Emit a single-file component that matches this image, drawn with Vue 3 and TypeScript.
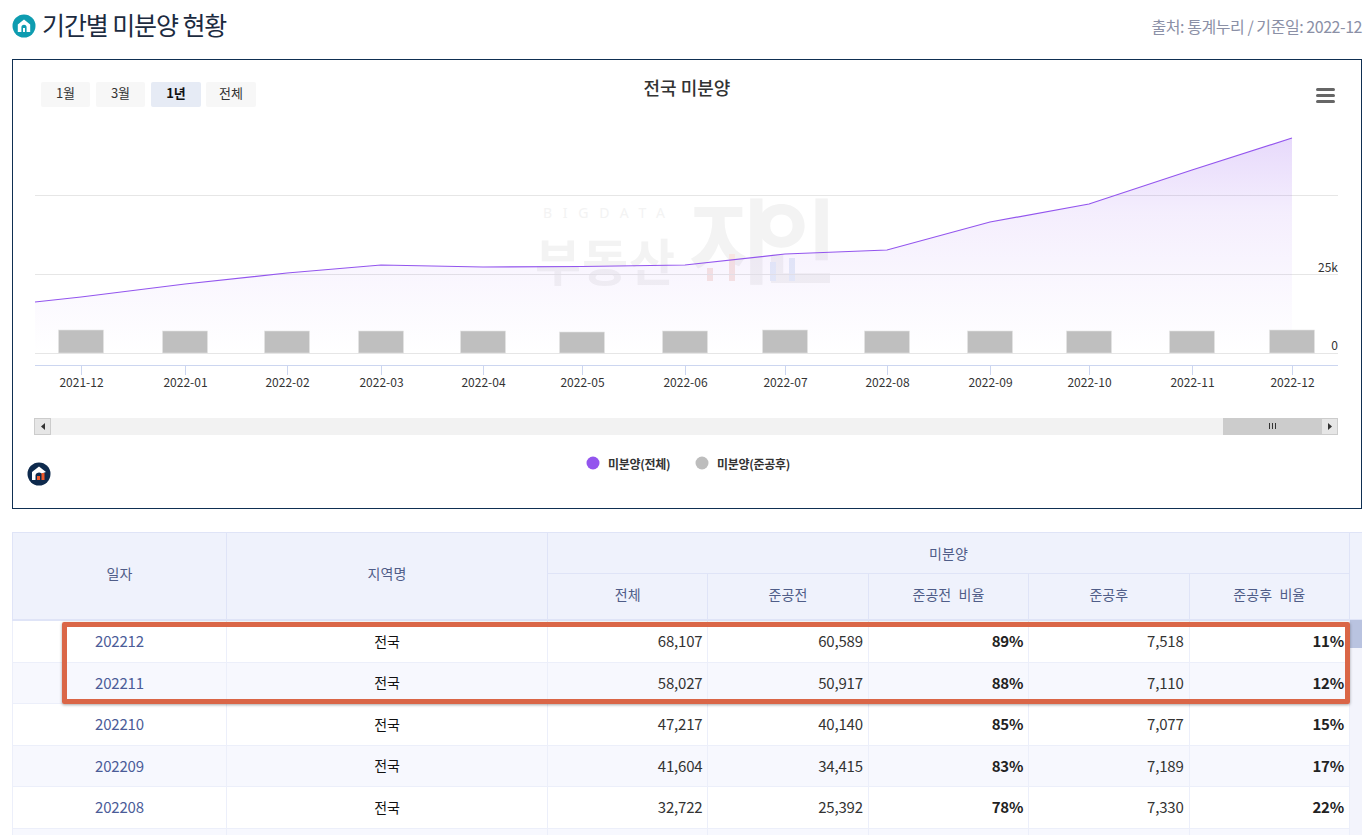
<script setup lang="ts">
interface Row { date: string; total: string; pre: string; preR: string; post: string; postR: string }
const rows: Row[] = [
  { date: '202212', total: '68,107', pre: '60,589', preR: '89%', post: '7,518', postR: '11%' },
  { date: '202211', total: '58,027', pre: '50,917', preR: '88%', post: '7,110', postR: '12%' },
  { date: '202210', total: '47,217', pre: '40,140', preR: '85%', post: '7,077', postR: '15%' },
  { date: '202209', total: '41,604', pre: '34,415', preR: '83%', post: '7,189', postR: '17%' },
  { date: '202208', total: '32,722', pre: '25,392', preR: '78%', post: '7,330', postR: '22%' },
]
const pts: { x: number; y: number; h: number; label: string }[] = [
  { x: 81, y: 297, h: 23, label: '2021-12' },
  { x: 185, y: 284, h: 22, label: '2022-01' },
  { x: 287, y: 273, h: 22, label: '2022-02' },
  { x: 381, y: 265, h: 22, label: '2022-03' },
  { x: 483, y: 267, h: 22, label: '2022-04' },
  { x: 582, y: 266.5, h: 21, label: '2022-05' },
  { x: 685, y: 265, h: 22, label: '2022-06' },
  { x: 785, y: 254, h: 23, label: '2022-07' },
  { x: 887, y: 250, h: 22, label: '2022-08' },
  { x: 990, y: 222, h: 22, label: '2022-09' },
  { x: 1089, y: 204, h: 22, label: '2022-10' },
  { x: 1192, y: 170, h: 22, label: '2022-11' },
  { x: 1292, y: 138, h: 23, label: '2022-12' },
]
const linePts = '35,302 ' + pts.map(p => `${p.x},${p.y}`).join(' ')
const areaPts = `${linePts} 1292,353 35,353`
const buttons = [
  { x: 41, w: 49, t: '1월', active: false },
  { x: 96, w: 49, t: '3월', active: false },
  { x: 151, w: 50, t: '1년', active: true },
  { x: 206, w: 50, t: '전체', active: false },
]
const heads = ['전체', '준공전', '준공전 비율', '준공후', '준공후 비율']
</script>

<template>
  <div class="page">
    <header class="head">
      <h1 class="title">
        <svg class="ticon" viewBox="0 0 24 24" width="24" height="24">
          <circle cx="12" cy="12" r="11.5" fill="#0e9cb0" />
          <path d="M12 5.5 5.8 10.6V18h3.6v-4.6a2.6 2.6 0 0 1 5.2 0V18h3.6v-7.4z" fill="#fff" />
          <rect x="11" y="14" width="2" height="4" fill="#fff" />
        </svg>
        기간별 미분양 현황
      </h1>
      <span class="source">출처: 통계누리 / 기준일: 2022-12</span>
    </header>

    <section class="card">
      <svg class="chart" viewBox="13 60 1348 448" width="1348" height="448">
        <defs>
          <linearGradient id="area" x1="0" y1="0" x2="0" y2="1">
            <stop offset="0" stop-color="#9355ee" stop-opacity="0.22" />
            <stop offset="0.35" stop-color="#9355ee" stop-opacity="0.1" />
            <stop offset="0.65" stop-color="#9355ee" stop-opacity="0.05" />
            <stop offset="1" stop-color="#9355ee" stop-opacity="0" />
          </linearGradient>
        </defs>

        <g class="wm">
          <text x="543" y="218" class="wm-small" textLength="122">BIGDATA</text>
          <text x="535" y="281" class="wm-mid" textLength="140">부동산</text>
          <text x="763" y="276" class="wm-big" text-anchor="middle" textLength="150">지인</text>
          <rect x="707" y="268" width="6" height="13" fill="#f8e6e2" />
          <rect x="729" y="254" width="6" height="27" fill="#f8e6e2" />
          <rect x="770" y="262" width="6" height="19" fill="#e6edf8" />
          <rect x="789" y="258" width="6" height="23" fill="#e6edf8" />
        </g>

        <line v-for="y in [195, 274, 353]" :key="y" x1="35" x2="1338" :y1="y + 0.5" :y2="y + 0.5" stroke="#e6e6e6" />
        <polygon :points="areaPts" fill="url(#area)" />
        <polyline :points="linePts" fill="none" stroke="#9355ee" stroke-width="1.2" />
        <rect v-for="p in pts" :key="'b' + p.label" :x="p.x - 22.5" :y="353 - p.h" width="45" :height="p.h" fill="#bfbfbf" stroke="#e4e4e4" stroke-width="0.6" />

        <line x1="35" x2="1338" y1="365.5" y2="365.5" stroke="#ccd6f0" />
        <g v-for="p in pts" :key="'l' + p.label">
          <line :x1="p.x + 0.5" :x2="p.x + 0.5" y1="365" y2="375" stroke="#ccd6f0" />
          <text :x="p.x + 0.5" y="387" text-anchor="middle" class="axis">{{ p.label }}</text>
        </g>
        <text x="1338" y="272" text-anchor="end" class="axis">25k</text>
        <text x="1338" y="350" text-anchor="end" class="axis">0</text>

        <g v-for="b in buttons" :key="b.t">
          <rect :x="b.x" y="82" :width="b.w" height="25" rx="2" :fill="b.active ? '#e6ebf5' : '#f7f7f7'" />
          <text :x="b.x + b.w / 2" y="98" text-anchor="middle" class="btn" :class="{ on: b.active }">{{ b.t }}</text>
        </g>
        <text x="687" y="95" text-anchor="middle" class="ctitle">전국 미분양</text>
        <g fill="#666">
          <rect x="1316" y="88" width="19" height="3" rx="1.5" />
          <rect x="1316" y="94" width="19" height="3" rx="1.5" />
          <rect x="1316" y="100" width="19" height="3" rx="1.5" />
        </g>

        <rect x="34" y="418" width="1304" height="17" fill="#f2f2f2" />
        <rect x="34.5" y="418.5" width="16" height="16" fill="#e6e6e6" stroke="#cccccc" />
        <path d="M45 423v7l-4-3.5z" fill="#333" />
        <rect x="1223" y="418" width="115" height="17" fill="#cccccc" />
        <rect x="1322" y="419" width="15" height="15" fill="#e6e6e6" />
        <path d="M1328 423v7l4-3.5z" fill="#333" />
        <g stroke="#333"><line x1="1269.5" x2="1269.5" y1="423" y2="429" /><line x1="1272.5" x2="1272.5" y1="423" y2="429" /><line x1="1275.5" x2="1275.5" y1="423" y2="429" /></g>

        <circle cx="593" cy="463" r="6.5" fill="#9355ee" />
        <text x="608" y="468.5" class="legend">미분양(전체)</text>
        <circle cx="702" cy="463" r="6.5" fill="#bdbdbd" />
        <text x="717" y="468.5" class="legend">미분양(준공후)</text>

        <circle cx="39" cy="474" r="11.5" fill="#0e2a4d" />
        <path d="M39 466.5 32 472v8h3.5v-5a3.5 3 0 0 1 6 -1.5l4.5-1.5z" fill="#fff" />
        <rect x="37" y="476" width="3" height="4" fill="#f0592a" />
        <rect x="41.5" y="473" width="3" height="7" fill="#f0592a" />
      </svg>
    </section>

    <section class="grid-wrap">
      <div class="grid-main">
        <table class="tbl">
          <colgroup>
            <col class="c1" /><col class="c2" /><col class="c3" /><col class="c3" /><col class="c3" /><col class="c3" /><col class="c3" />
          </colgroup>
          <thead>
            <tr class="h1">
              <th rowspan="2" class="span">일자</th>
              <th rowspan="2" class="span">지역명</th>
              <th colspan="5">미분양</th>
            </tr>
            <tr class="h2">
              <th v-for="h in heads" :key="h">{{ h }}</th>
            </tr>
          </thead>
          <tbody>
            <tr v-for="r in rows" :key="r.date">
              <td class="date">{{ r.date }}</td>
              <td class="region">전국</td>
              <td class="num">{{ r.total }}</td>
              <td class="num">{{ r.pre }}</td>
              <td class="num strong">{{ r.preR }}</td>
              <td class="num">{{ r.post }}</td>
              <td class="num strong">{{ r.postR }}</td>
            </tr>
            <tr>
              <td></td><td></td><td></td><td></td><td></td><td></td><td></td>
            </tr>
          </tbody>
        </table>
        <div class="highlight"></div>
      </div>
      <aside class="vbar"><div class="vhead"></div><div class="vthumb"></div></aside>
    </section>
  </div>
</template>

<style>
html, body { margin: 0; background: #fff; overflow: hidden; }
</style>

<style scoped>
.page {
  width: 1363px;
  height: 835px;
  overflow: hidden;
  box-sizing: border-box;
  padding-left: 12px;
  padding-right: 1px;
  font-family: "Noto Sans CJK KR", "Noto Sans", sans-serif;
  color: #333;
}
.head {
  height: 59px;
  display: flex;
  justify-content: space-between;
  align-items: flex-start;
}
.title {
  margin: 0;
  padding-top: 6px;
  display: flex;
  align-items: center;
  gap: 6px;
  font-size: 25px;
  line-height: 36px;
  height: 36px;
  font-weight: 400;
  letter-spacing: -1.1px;
  color: #1c2b3f;
}
.ticon { flex: none; margin-top: 4px; }
.source {
  padding-top: 14px;
  font-size: 16px;
  line-height: 24px;
  letter-spacing: -0.45px;
  color: #8b90a6;
}
.card {
  height: 450px;
  box-sizing: border-box;
  border: 1px solid #0f2f52;
  background: #fff;
}
.chart { display: block; }
.axis { font-size: 12px; fill: #333; }
.btn { font-size: 13px; fill: #333; }
.btn.on { font-weight: 700; fill: #111; }
.ctitle { font-size: 18px; font-weight: 500; fill: #333; }
.legend { font-size: 12px; font-weight: 700; letter-spacing: -0.3px; fill: #333; }
.wm text { fill: #f3f3f3; }
.wm-small { font-size: 14px; font-family: "Noto Sans", sans-serif; }
.wm-mid { font-size: 50px; font-weight: 700; }
.wm-big { font-size: 92px; font-weight: 700; }

.grid-wrap {
  margin-top: 23px;
  display: flex;
  width: 1350px;
}
.grid-main {
  position: relative;
  width: 1337px;
  flex: none;
}
.tbl {
  width: 1337px;
  table-layout: fixed;
  border-collapse: collapse;
  font-size: 14px;
}
.c1 { width: 214px; }
.c2 { width: 321px; }
.c3 { width: 160.4px; }
.tbl th {
  box-sizing: border-box;
  background: #eff2fc;
  border: 1px solid #dfe4f7;
  font-weight: 400;
  color: #4f5d88;
  padding: 0;
  word-spacing: 4px;
  letter-spacing: 0.1px;
}
.h1 th { height: 41px; }
.h2 th { height: 46px; padding-bottom: 5px; }
.tbl th.span { padding-bottom: 5px; }
thead { border-bottom: 2px solid #dfe4f7; }
.tbl td {
  height: 41.5px;
  padding: 0 5px 1px;
  box-sizing: border-box;
  border: 1px solid #eceffa;
  background: #fff;
  font-size: 15px;
  letter-spacing: -0.2px;
}
.tbl tbody tr:first-child td { height: 42.5px; }
.tbl tbody tr:nth-child(even) td { background: #f7f8fe; }
.date { text-align: center; color: #4b5c98; }
.tbl td.region { text-align: center; color: #111; font-size: 14px; }
.num { text-align: right; color: #333; }
.strong { font-weight: 700; color: #222; }
.highlight {
  position: absolute;
  left: 50px;
  right: -1px;
  top: 90px;
  height: 82px;
  box-sizing: border-box;
  border: 5px solid #da6647;
  border-radius: 2px;
  box-shadow: 0 1px 3px rgba(0, 0, 0, 0.35);
  pointer-events: none;
}
.vbar {
  width: 13px;
  flex: none;
  background: #f3f4fc;
  box-sizing: border-box;
  border-left: 1px solid #dfe4f7;
  height: 320px;
}
.vhead {
  height: 88px;
  box-sizing: border-box;
  background: #eff2fc;
  border-top: 1px solid #dfe4f7;
  border-bottom: 1px solid #dfe4f7;
}
.vthumb {
  height: 28px;
  background: #b9c3e0;
}
</style>
